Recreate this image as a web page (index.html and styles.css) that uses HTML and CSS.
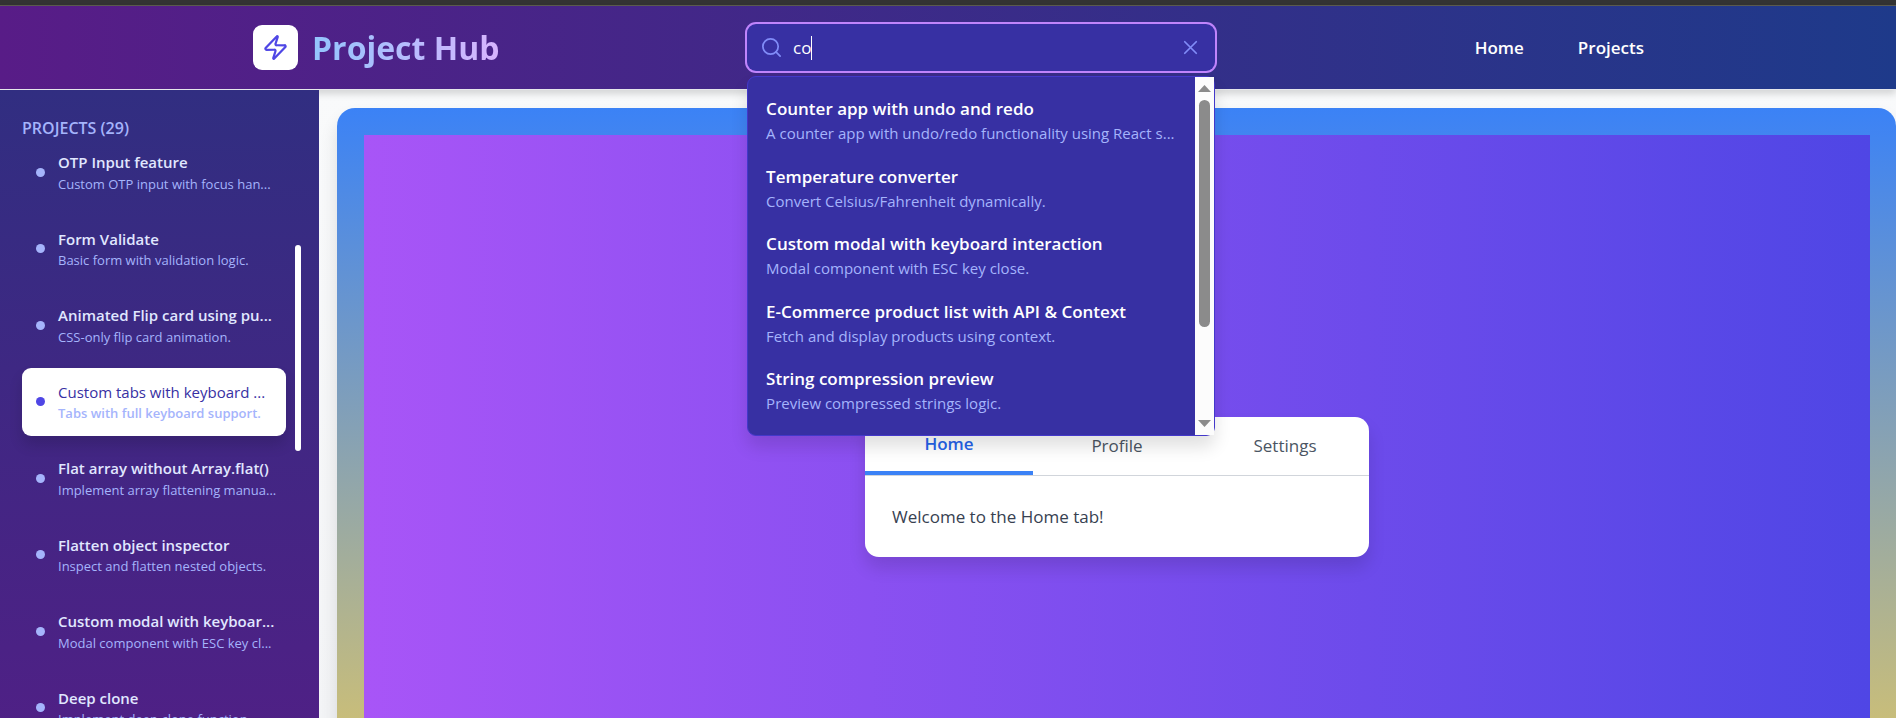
FILE: index.html
```html
<!DOCTYPE html>
<html lang="en">
<head>
<meta charset="utf-8">
<title>Project Hub</title>
<link rel="stylesheet" href="styles.css">
</head>
<body>
<div class="shell">
  <div class="window-edge"></div>
  <header class="topbar">
    <div class="topbar-inner">
      <div class="brand">
        <span class="brand-mark">
          <svg width="27" height="27" viewBox="0 0 24 24" fill="none" stroke="currentColor" stroke-width="2" stroke-linecap="round" stroke-linejoin="round" aria-hidden="true"><path d="M4 14a1 1 0 0 1-.78-1.63l9.9-10.2a.5.5 0 0 1 .86.46l-1.92 6.02A1 1 0 0 0 13 10h7a1 1 0 0 1 .78 1.63l-9.9 10.2a.5.5 0 0 1-.86-.46l1.92-6.02A1 1 0 0 0 11 14z"/></svg>
        </span>
        <h1 class="brand-name">Project Hub</h1>
      </div>
      <div class="search">
        <div class="search-box">
          <svg class="search-icon" width="23" height="23" viewBox="0 0 24 24" fill="none" stroke="currentColor" stroke-width="2" stroke-linecap="round" stroke-linejoin="round" aria-hidden="true"><circle cx="11" cy="11" r="8"/><path d="m21 21-4.35-4.35"/></svg>
          <input class="search-input" type="text" value="co" aria-label="Search projects">
          <span class="caret"></span>
          <button class="search-clear" type="button" aria-label="Clear search">
            <svg width="23" height="23" viewBox="0 0 24 24" fill="none" stroke="currentColor" stroke-width="2" stroke-linecap="round" stroke-linejoin="round" aria-hidden="true"><path d="M18 6 6 18M6 6l12 12"/></svg>
          </button>
        </div>
        <div class="results">
          <ul class="results-list">
            <li class="result"><div class="result-title">Counter app with undo and redo</div><div class="result-text">A counter app with undo/redo functionality using React s...</div></li>
            <li class="result"><div class="result-title">Temperature converter</div><div class="result-text">Convert Celsius/Fahrenheit dynamically.</div></li>
            <li class="result"><div class="result-title">Custom modal with keyboard interaction</div><div class="result-text">Modal component with ESC key close.</div></li>
            <li class="result"><div class="result-title">E-Commerce product list with API &amp; Context</div><div class="result-text">Fetch and display products using context.</div></li>
            <li class="result"><div class="result-title">String compression preview</div><div class="result-text">Preview compressed strings logic.</div></li>
          </ul>
          <div class="results-scroll">
            <svg width="13" height="7" viewBox="0 0 13 7" aria-hidden="true"><path d="M6.500 0 13 7H0z" fill="#8b8b8b"/></svg>
            <span class="results-thumb"></span>
            <svg class="scroll-down" width="13" height="7" viewBox="0 0 13 7" aria-hidden="true"><path d="M0 0h13L6.500 7z" fill="#8b8b8b"/></svg>
          </div>
        </div>
      </div>
      <nav class="nav">
        <a class="nav-link" href="#home">Home</a>
        <a class="nav-link" href="#projects">Projects</a>
      </nav>
    </div>
  </header>
  <div class="body">
    <aside class="sidebar">
      <h2 class="sidebar-title">PROJECTS (29)</h2>
      <div class="sidebar-scroll">
        <ul class="projects">
          <li class="project"><span class="dot"></span><div class="project-body"><div class="project-title">OTP Input feature</div><div class="project-text">Custom OTP input with focus han...</div></div></li>
          <li class="project"><span class="dot"></span><div class="project-body"><div class="project-title">Form Validate</div><div class="project-text">Basic form with validation logic.</div></div></li>
          <li class="project"><span class="dot"></span><div class="project-body"><div class="project-title">Animated Flip card using pu...</div><div class="project-text">CSS-only flip card animation.</div></div></li>
          <li class="project project-active"><span class="dot"></span><div class="project-body"><div class="project-title">Custom tabs with keyboard ...</div><div class="project-text">Tabs with full keyboard support.</div></div></li>
          <li class="project"><span class="dot"></span><div class="project-body"><div class="project-title">Flat array without Array.flat()</div><div class="project-text">Implement array flattening manua...</div></div></li>
          <li class="project"><span class="dot"></span><div class="project-body"><div class="project-title">Flatten object inspector</div><div class="project-text">Inspect and flatten nested objects.</div></div></li>
          <li class="project"><span class="dot"></span><div class="project-body"><div class="project-title">Custom modal with keyboar...</div><div class="project-text">Modal component with ESC key cl...</div></div></li>
          <li class="project"><span class="dot"></span><div class="project-body"><div class="project-title">Deep clone</div><div class="project-text">Implement deep clone function.</div></div></li>
        </ul>
        <div class="sidebar-track"><div class="sidebar-thumb"></div></div>
      </div>
    </aside>
    <main class="content">
      <section class="stage">
        <div class="canvas">
          <div class="tabs-card">
            <div class="tabs" role="tablist">
              <button class="tab tab-active" type="button" role="tab" aria-selected="true">Home</button>
              <button class="tab" type="button" role="tab" aria-selected="false">Profile</button>
              <button class="tab" type="button" role="tab" aria-selected="false">Settings</button>
            </div>
            <div class="tab-panel" role="tabpanel">Welcome to the Home tab!</div>
          </div>
        </div>
      </section>
    </main>
  </div>
</div>
</body>
</html>
```
FILE: styles.css
```css
* { box-sizing: border-box; }

body {
  margin: 0;
  font-family: "Open Sans", "Noto Sans", sans-serif;
  line-height: 1.5;
}

h1, h2, ul { margin: 0; padding: 0; }
ul { list-style: none; }
svg { display: block; }
button, input { font: inherit; border: 0; background: none; padding: 0; margin: 0; }

.shell {
  display: flex;
  flex-direction: column;
  height: 100vh;
  overflow: hidden;
}

.window-edge {
  flex: none;
  height: 6px;
  background: #333333;
  border-bottom: 1px solid #5c5c50;
}

/* Top bar */
.topbar {
  position: relative;
  z-index: 2;
  flex: none;
  background: linear-gradient(to right, #581c87, #1e3a8a);
  border-bottom: 1px solid #e5e7eb;
  box-shadow: 0 4px 7px rgba(0, 0, 0, 0.15);
}

.topbar-inner {
  display: flex;
  align-items: center;
  justify-content: space-between;
  max-width: 1440px;
  margin: 0 auto;
  padding: 18px 24px 18px 25px;
}

.brand { display: flex; align-items: center; gap: 14px; }

.brand-mark {
  padding: 9px;
  border-radius: 9px;
  background: #ffffff;
  color: #4f46e5;
}

.brand-name {
  font-size: 32px;
  line-height: 45px;
  font-weight: 700;
  color: transparent;
  background: linear-gradient(to right, #93c5fd, #d8b4fe);
  background-clip: text;
  -webkit-background-clip: text;
}

.search { position: relative; width: 468px; }

.search-box {
  display: flex;
  align-items: center;
  height: 47px;
  padding: 0 13px;
  border-radius: 9px;
  background: #3730a3;
  box-shadow: 0 0 0 2px #c084fc;
  color: #818cf8;
}

.search-icon { margin-right: 10px; }
.search-icon, .search-clear svg { stroke-width: 1.8; }

.search-input {
  field-sizing: content;
  color: #ffffff;
  font-size: 17px;
  outline: none;
}

.caret { width: 1px; height: 24px; background: #ffffff; }
.search-clear { margin-left: auto; color: inherit; cursor: pointer; }

.results {
  position: absolute;
  top: calc(100% + 5px);
  left: 0;
  right: 0;
  display: flex;
  height: 360px;
  border: 1px solid #4338ca;
  border-radius: 9px;
  background: #3730a3;
  box-shadow: 0 11px 17px rgba(0, 0, 0, 0.12);
}

.results-list { flex: 1; min-width: 0; padding: 9px 0; }
.result { padding: 9px 18px; }

.result-title, .result-text, .project-title, .project-text { white-space: nowrap; }

.result-title { font-size: 17px; line-height: 27px; font-weight: 600; color: #ffffff; }
.result-text { font-size: 15px; color: #a5b4fc; }

.results-scroll {
  display: flex;
  flex-direction: column;
  align-items: center;
  width: 19px;
  padding: 8px 0;
  background: #fcfcfc;
}

.results-thumb {
  width: 11px;
  height: 227px;
  margin-top: 8px;
  border-radius: 6px;
  background: #8b8b8b;
}

.scroll-down { margin-top: auto; }

.nav { display: flex; gap: 54px; padding-left: 12px; }
.nav-link { font-size: 17px; font-weight: 600; color: #ffffff; text-decoration: none; }

/* Sidebar */
.body { flex: 1; display: flex; min-height: 0; }

.sidebar {
  position: relative;
  z-index: 3;
  flex: none;
  width: 319px;
  height: 836px;
  padding: 28px 18px 0 22px;
  background: linear-gradient(to bottom, #312e81, #581c87);
}

.sidebar-title { font-size: 16px; line-height: 20px; font-weight: 600; color: #a5b4fc; }
.sidebar-scroll { display: flex; gap: 9px; }

.projects {
  flex: 1;
  min-width: 0;
  display: flex;
  flex-direction: column;
  gap: 8px;
}

.project {
  display: flex;
  align-items: center;
  gap: 13px;
  padding: 13px 10px 13px 14px;
  border-radius: 9px;
  color: #e0e7ff;
}

.dot { flex: none; width: 9px; height: 9px; border-radius: 50%; background: #a5b4fc; }
.project-body { flex: 1; min-width: 0; }
.project-title { font-size: 15px; font-weight: 600; }
.project-text { font-size: 13px; line-height: 20px; color: #a5b4fc; }

.project-active {
  background: #ffffff;
  color: #3730a3;
  box-shadow: 0 9px 14px rgba(0, 0, 0, 0.14);
}

.project-active .dot { background: #4f46e5; }
.project-active .project-title { font-weight: 500; }
.project-active .project-text { font-weight: 600; }

.sidebar-track { width: 6px; padding-top: 107px; }
.sidebar-thumb { height: 206px; border-radius: 3px; background: #ffffff; }

/* Content */
.content {
  flex: 1;
  min-width: 0;
  padding: 18px 0 0 18px;
  background: linear-gradient(to bottom, #f9fafb, #f3f4f6);
}

.stage {
  padding: 27px 26px 105px 27px;
  border-radius: 18px;
  background: linear-gradient(to bottom, #3b82f6, #fcd34d);
  box-shadow: 0 11px 17px rgba(0, 0, 0, 0.12);
}

.canvas {
  display: flex;
  align-items: center;
  justify-content: center;
  min-height: 704px;
  background: linear-gradient(to right, #a855f7, #4f46e5);
}

.tabs-card {
  width: 504px;
  overflow: hidden;
  border-radius: 14px;
  background: #ffffff;
  box-shadow: 0 11px 17px rgba(0, 0, 0, 0.12);
}

.tabs { display: flex; height: 59px; border-bottom: 1px solid #d1d5db; }
.tab { flex: 1; font-size: 17px; color: #4b5563; cursor: pointer; }
.tab-active { font-weight: 600; color: #2563eb; border-bottom: 4px solid #3b82f6; }
.tab-panel { padding: 27px; font-size: 17px; line-height: 27px; color: #374151; }
```
